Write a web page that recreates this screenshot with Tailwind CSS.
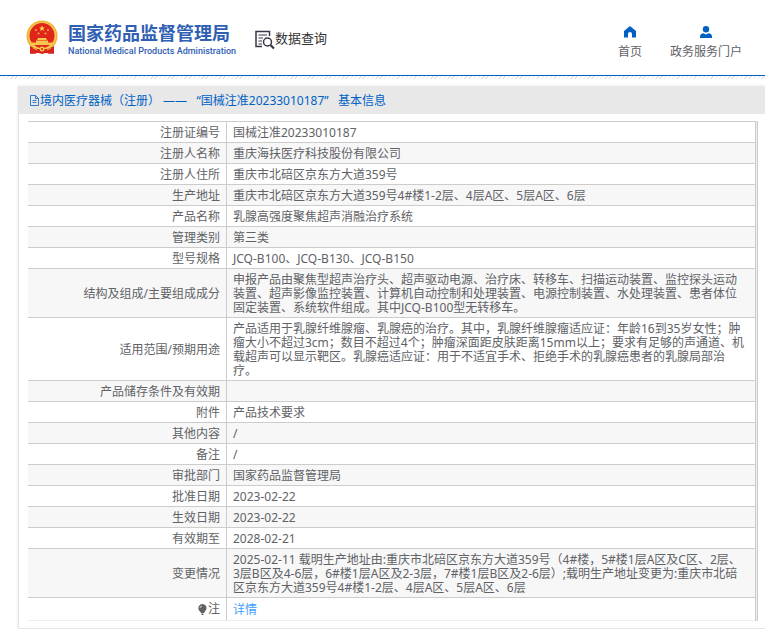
<!DOCTYPE html>
<html lang="zh-CN">
<head>
    <meta charset="UTF-8">
    <meta name="viewport" content="width=device-width, initial-scale=1.0">
    <title>国家药品监督管理局 - 数据查询</title>
    <script src="https://cdn.jsdelivr.net/npm/@tailwindcss/browser@4"></script>
</head>
<body class="bg-white font-['Noto_Sans','Noto_Sans_CJK_SC',sans-serif] text-xs text-[#606266] overflow-x-hidden">
    <!-- Header -->
    <header class="flex items-center h-[76px] pl-[26px] pr-[23px] border-b border-[#0061c3]">
        <a href="#" class="flex items-center gap-[10px] text-[#2f60b3]">
            <svg class="w-8 h-[35px]" viewBox="0 0 32 35">
                <path d="M5 24L4 33.500L11 32.500L16 34L21 32.500L28 33.500L27 24Z" fill="#d8261c"/>
                <circle cx="16" cy="16" r="15.500" fill="#f0b43c"/>
                <circle cx="16" cy="16" r="14" fill="#f6c74c"/>
                <circle cx="16" cy="15.500" r="12.500" fill="#e0251b"/>
                <path d="M16 5.500l.9 2h2.100l-1.700 1.300.6 2.100-1.900-1.200-1.900 1.200.6-2.100L13 7.500h2.100z" fill="#f9d34f"/>
                <circle cx="10" cy="10" r="1" fill="#f3b340"/>
                <circle cx="22" cy="10" r="1" fill="#f3b340"/>
                <circle cx="12.500" cy="13.500" r="1" fill="#f3b340"/>
                <circle cx="19.500" cy="13.500" r="1" fill="#f3b340"/>
                <path d="M12 18h8l1 2h-10zM10 20.500h12v2h4v2.500H6v-2.500h4z" fill="#f6c74c"/>
                <path d="M4 26c3 2 6 3 8 3h8c2 0 5-1 8-3v7.500c-3 .5-5 .5-7-.5h-10c-2 1-4 1-7 .5z" fill="#d8261c"/>
                <path d="M7 28l4 2M25 28l-4 2" stroke="#f0b43c" stroke-width="1"/>
                <circle cx="16" cy="29" r="2.500" fill="#f6c74c"/>
                <circle cx="16" cy="29" r="1" fill="#d8261c"/>
            </svg>
            <span class="flex flex-col pt-[2px]">
                <span class="text-lg leading-6 font-bold whitespace-nowrap">国家药品监督管理局</span>
                <span class="font-[Roboto] text-[9px] leading-3 font-medium whitespace-nowrap">National Medical Products Administration</span>
            </span>
        </a>
        <a href="#" class="flex items-center ml-[19px] text-[13px] leading-5 text-[#333]">
            <svg class="w-5 h-5 mt-1" viewBox="0 0 20 20" fill="none" stroke="#37374a" stroke-width="1.500">
                <path d="M7 16.500H1V1.500H14.500V6"/>
                <path d="M3.500 5H12M3.500 8H8M3.500 11H7M3.500 14H7" stroke-width="1.200"/>
                <circle cx="12.500" cy="12" r="4"/>
                <path d="M15.500 15L19 18.500" stroke-width="2.200"/>
            </svg>
            <span>数据查询</span>
        </a>
        <nav class="flex gap-7 ml-auto mt-3">
            <a href="#" class="flex flex-col items-center gap-1">
                <svg class="w-3 h-3" viewBox="0 0 12 12"><path d="M6 0L12 5V11.500H8V8a2 2 0 0 0-4 0V11.500H0V5Z" fill="#0061c3"/></svg>
                <span class="leading-5">首页</span>
            </a>
            <a href="#" class="flex flex-col items-center gap-1">
                <svg class="w-3 h-3" viewBox="0 0 12 12" fill="#0061c3"><circle cx="6" cy="3.200" r="3.200"/><path d="M0 12V10.500C0 8.500 1.500 7.500 3.500 7.200L6 8.500L8.500 7.200C10.500 7.500 12 8.500 12 10.500V12Z"/></svg>
                <span class="leading-5">政务服务门户</span>
            </a>
        </nav>
    </header>
    <div class="h-[3px] bg-[repeating-linear-gradient(135deg,#e4e4e4_0_1px,#fff_1px_3px)]"></div>

    <!-- Detail card -->
    <main class="ml-[18px] mt-[7px] border-l border-b border-[#e4e4e4] shadow-[0_0_3px_#e4e4e4]">
        <h1 class="flex items-center h-7 pt-px pl-[10px] bg-[#e8e8e8] text-[#0061c3]">
            <svg class="w-[11px] h-[11px]" viewBox="0 0 11 11" fill="none" stroke="#0061c3">
                <path d="M1.500.5H6.500L9.500 3.500V10.500H1.500ZM6.500.5V3.500H9.500M3.500 5.500H7.500M3.500 7.500H7.500" stroke-width=".8"/>
            </svg>
            <span>境内医疗器械（注册） ——&nbsp;&nbsp; “国械注准20233010187”&nbsp;&nbsp; 基本信息</span>
        </h1>
        <div class="mt-[7px] ml-[9px] mr-[7px] mb-[7px] border-r border-[#ccc] pr-px bg-[#ebeef5]">
            <table class="w-full table-fixed border-separate border-spacing-0 border-t border-r border-[#ccc] bg-white leading-[14px] [&_th]:font-normal [&_th]:text-right [&_th]:px-[6px] [&_th]:pt-1 [&_th]:pb-[2px] [&_th]:border-r [&_td]:pl-[6px] [&_td]:pr-2 [&_td]:pt-1 [&_td]:pb-[2px] [&_th]:border-b [&_td]:border-b [&_th]:border-[#ccc] [&_td]:border-[#ccc]">
                <colgroup>
                    <col class="w-[199px]">
                    <col>
                </colgroup>
                <tbody class="[&>tr:nth-child(even)]:bg-[#f7f7f7]">
                    <tr><th scope="row">注册证编号</th><td>国械注准20233010187</td></tr>
                    <tr><th scope="row">注册人名称</th><td>重庆海扶医疗科技股份有限公司</td></tr>
                    <tr><th scope="row">注册人住所</th><td>重庆市北碚区京东方大道359号</td></tr>
                    <tr><th scope="row">生产地址</th><td>重庆市北碚区京东方大道359号4#楼1-2层、4层A区、5层A区、6层</td></tr>
                    <tr><th scope="row">产品名称</th><td>乳腺高强度聚焦超声消融治疗系统</td></tr>
                    <tr><th scope="row">管理类别</th><td>第三类</td></tr>
                    <tr><th scope="row">型号规格</th><td>JCQ-B100、JCQ-B130、JCQ-B150</td></tr>
                    <tr><th scope="row">结构及组成/主要组成成分</th><td>申报产品由聚焦型超声治疗头、超声驱动电源、治疗床、转移车、扫描运动装置、监控探头运动装置、超声影像监控装置、计算机自动控制和处理装置、电源控制装置、水处理装置、患者体位固定装置、系统软件组成。其中JCQ-B100型无转移车。</td></tr>
                    <tr><th scope="row">适用范围/预期用途</th><td>产品适用于乳腺纤维腺瘤、乳腺癌的治疗。其中，乳腺纤维腺瘤适应证：年龄16到35岁女性；肿瘤大小不超过3cm；数目不超过4个；肿瘤深面距皮肤距离15mm以上；要求有足够的声通道、机载超声可以显示靶区。乳腺癌适应证：用于不适宜手术、拒绝手术的乳腺癌患者的乳腺局部治疗。</td></tr>
                    <tr><th scope="row">产品储存条件及有效期</th><td></td></tr>
                    <tr><th scope="row">附件</th><td>产品技术要求</td></tr>
                    <tr><th scope="row">其他内容</th><td>/</td></tr>
                    <tr><th scope="row">备注</th><td>/</td></tr>
                    <tr><th scope="row">审批部门</th><td>国家药品监督管理局</td></tr>
                    <tr><th scope="row">批准日期</th><td>2023-02-22</td></tr>
                    <tr><th scope="row">生效日期</th><td>2023-02-22</td></tr>
                    <tr><th scope="row">有效期至</th><td>2028-02-21</td></tr>
                    <tr><th scope="row">变更情况</th><td>2025-02-11 载明生产地址由:重庆市北碚区京东方大道359号（4#楼，5#楼1层A区及C区、2层、3层B区及4-6层，6#楼1层A区及2-3层，7#楼1层B区及2-6层）;载明生产地址变更为:重庆市北碚区京东方大道359号4#楼1-2层、4层A区、5层A区、6层</td></tr>
                    <tr class="h-[23px] [&>*]:border-b-[#ebeef5]!">
                        <th scope="row">
                            <span class="inline-flex items-center">
                                <svg class="w-[11px] h-[11px]" viewBox="0 0 11 11" fill="#606266"><path d="M5.500 0a4.200 4.200 0 0 1 2.500 7.500L7 9H4L3 7.500A4.200 4.200 0 0 1 5.500 0ZM4.500 9.500h2V11h-2Z"/><path d="M3 4a2.500 2.500 0 0 1 2-2" fill="none" stroke="#fff" stroke-width=".7"/></svg>
                                注
                            </span>
                        </th>
                        <td><a href="#" class="text-[#409eff]">详情</a></td>
                    </tr>
                </tbody>
            </table>
        </div>
    </main>
</body>
</html>
